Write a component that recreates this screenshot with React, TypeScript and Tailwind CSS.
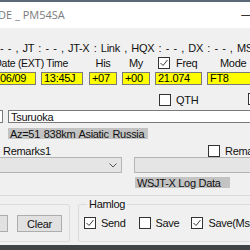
import React from "react";

const font = { fontFamily: '"Liberation Sans", "Noto Sans CJK JP", sans-serif' };

function Check({ checked = false }: { checked?: boolean }) {
  return (
    <span className="inline-flex w-[12px] h-[12px] shrink-0 items-center justify-center border border-[#333333] bg-white">
      {checked && (
        <svg width="10" height="10" viewBox="0 0 10 10">
          <polyline points="1.5,5 4,7.5 8.5,2" fill="none" stroke="#3a3a3a" strokeWidth="1" />
        </svg>
      )}
    </span>
  );
}

function Field({ w, ml, children }: { w: string; ml: string; children: React.ReactNode }) {
  return (
    <div className={`${w} ${ml} h-[13px] shrink-0 bg-[#ffff00] border border-[#7a7a7a] pl-[2px] flex items-center text-[11px] leading-[11px] text-black`}>
      {children}
    </div>
  );
}

export default function App() {
  return (
    <div className="w-[250px] h-[250px] overflow-hidden bg-[#f0f0f0] flex flex-col text-[11px] leading-[12px] tracking-[-0.3px] text-[#111]" style={font}>
      {/* title bar */}
      <div className="h-[28px] shrink-0 bg-white border-t-2 border-[#5b6877] flex items-center justify-between">
        <span className="ml-[-2px] text-[11px] tracking-normal text-[#7b7b7b] whitespace-nowrap" style={{ fontFamily: '"Open Sans", "Noto Sans", sans-serif' }}>
          DE _ PM54SA
        </span>
        <span className="text-[12px] text-[#333] mr-[-3px]">—</span>
      </div>

      {/* status line */}
      <div className="mt-[14px] h-[12px] whitespace-nowrap [word-spacing:1.6px]">
        - - , JT : - - , JT-X : Link , HQX : - - , DX : - - , MS
      </div>

      {/* labels */}
      <div className="mt-[2px] h-[14px] flex items-center whitespace-nowrap">
        <div className="w-[98px] ml-[-30px] shrink-0 text-right text-[10.5px]">Date (EXT) Time</div>
        <div className="w-[28px] ml-[21px] shrink-0 text-center">His</div>
        <div className="w-[28px] ml-[5px] shrink-0 text-center">My</div>
        <div className="w-[48px] ml-[8px] shrink-0 flex items-center gap-[6px]">
          <Check checked />
          <span>Freq</span>
        </div>
        <div className="ml-[14px] shrink-0">Mode</div>
      </div>

      {/* yellow fields */}
      <div className="mt-[2px] flex">
        <Field w="w-[39px]" ml="ml-[-3px]">06/09</Field>
        <Field w="w-[42px]" ml="ml-[5px]">13:45J</Field>
        <Field w="w-[28px]" ml="ml-[6px]">+07</Field>
        <Field w="w-[28px]" ml="ml-[5px]">+00</Field>
        <Field w="w-[47px]" ml="ml-[5px]">21.074</Field>
        <Field w="w-[60px]" ml="ml-[5px]">FT8</Field>
      </div>

      {/* QTH */}
      <div className="mt-[9px] h-[12px] flex items-center whitespace-nowrap">
        <div className="ml-[159px] flex items-center gap-[5px] shrink-0">
          <Check />
          <span>QTH</span>
        </div>
        <div className="ml-[50px] shrink-0">
          <Check />
        </div>
      </div>

      {/* QTH text */}
      <div className="mt-[4px] flex h-[13px]">
        <div className="w-[20px] ml-[-17px] shrink-0 bg-white border border-[#7a7a7a]" />
        <div className="w-[260px] ml-[5px] shrink-0 bg-white border border-[#7a7a7a] pl-[2px] flex items-center whitespace-nowrap">
          Tsuruoka
        </div>
      </div>

      {/* distance */}
      <div className="mt-[5px] h-[11px] flex">
        <div className="ml-[8px] w-[140px] bg-[#c3c3c3] pl-[2px] flex items-center whitespace-nowrap [word-spacing:1px]">
          Az=51 838km Asiatic Russia
        </div>
      </div>

      {/* remarks */}
      <div className="mt-[6px] h-[12px] flex items-center whitespace-nowrap">
        <span className="ml-[3px] shrink-0">Remarks1</span>
        <div className="ml-auto mr-[-40px] w-[82px] flex items-center gap-[5px] shrink-0">
          <Check />
          <span>Remarks2</span>
        </div>
      </div>

      {/* combos */}
      <div className="h-[16px] flex">
        <div className="w-[132px] ml-[-10px] shrink-0 bg-[#e5e5e5] border border-[#b4b4b4] flex items-center justify-end pr-[4px]">
          <svg width="8" height="5" viewBox="0 0 8 5">
            <polyline points="0.5,0.5 4,4 7.5,0.5" fill="none" stroke="#555" strokeWidth="1" />
          </svg>
        </div>
        <div className="w-[130px] ml-[12px] shrink-0 bg-[#e5e5e5] border border-[#b4b4b4]" />
      </div>

      {/* wsjt-x */}
      <div className="mt-[4px] h-[11px] flex">
        <div className="ml-[135px] w-[95px] bg-[#c3c3c3] pl-[2px] flex items-center whitespace-nowrap">
          WSJT-X Log Data
        </div>
      </div>

      <div className="mt-[7px] h-px shrink-0 bg-[#dadada]" />

      {/* group boxes */}
      <div className="flex items-start h-[49px] shrink-0">
        <div className="mt-[8px] ml-[-10px] w-[80px] h-[38px] shrink-0 border border-[#dcdcdc] rounded-[2px] flex items-start">
          <div className="mt-[10px] ml-[-20px] w-[37px] h-[17px] shrink-0 bg-[#e1e1e1] border border-[#adadad]" />
          <div className="mt-[10px] ml-[9px] w-[45px] h-[17px] shrink-0 bg-[#e1e1e1] border border-[#adadad] flex items-center justify-center">
            Clear
          </div>
        </div>
        <fieldset className="mt-[2px] ml-[8px] w-[200px] h-[44px] shrink-0 border border-[#dcdcdc] rounded-[2px] px-[5px] pb-[10px]">
          <legend className="ml-[3px] px-[2px] leading-[12px]">Hamlog</legend>
          <div className="mt-[7px] flex items-center whitespace-nowrap">
            <div className="flex items-center gap-[5px] shrink-0">
              <Check checked />
              <span>Send</span>
            </div>
            <div className="ml-[13px] flex items-center gap-[5px] shrink-0">
              <Check />
              <span>Save</span>
            </div>
            <div className="ml-[12px] flex items-center gap-[5px] shrink-0">
              <Check checked />
              <span>Save(Msg)</span>
            </div>
          </div>
        </fieldset>
      </div>

      <div className="flex-1 bg-[#3f4346]" />
    </div>
  );
}
